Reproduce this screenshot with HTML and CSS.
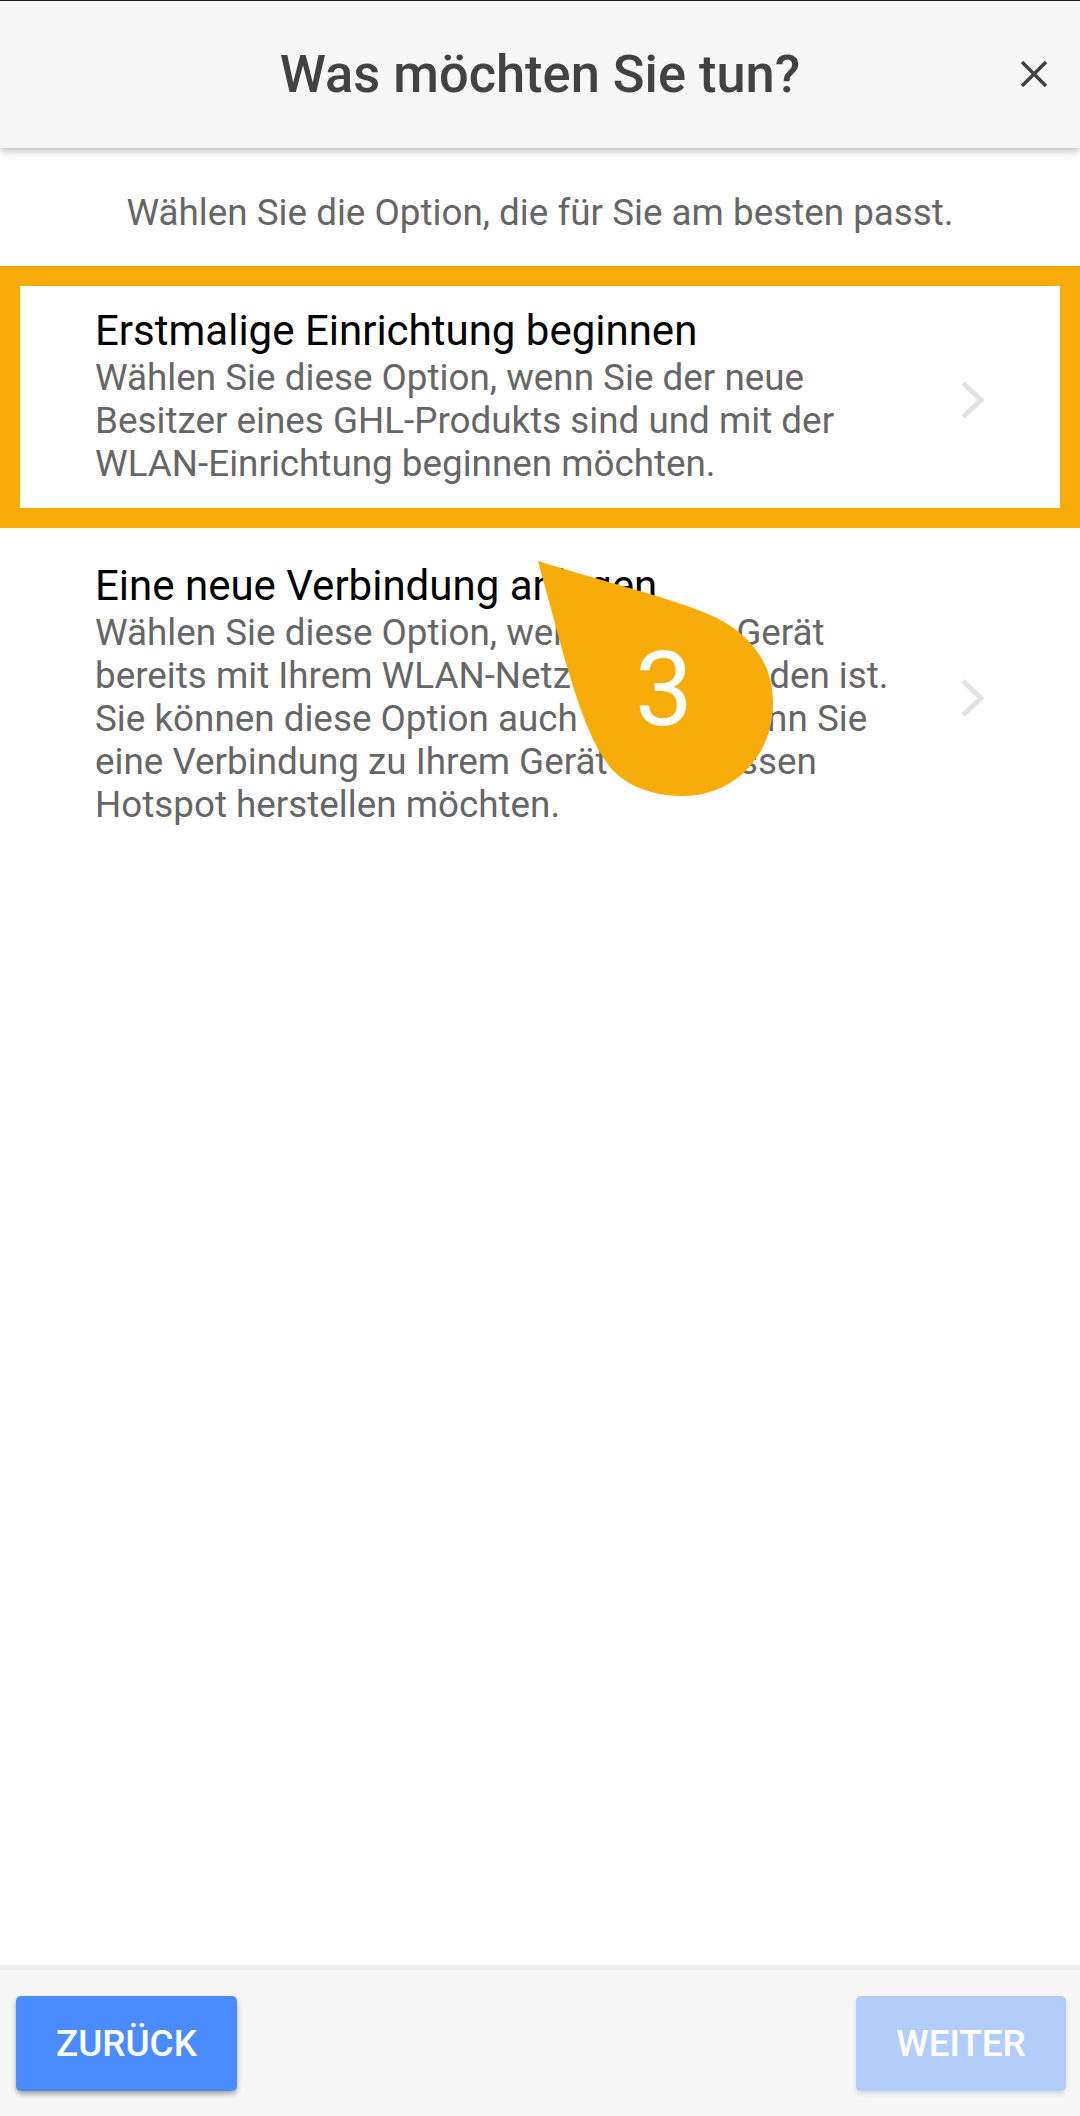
FILE: index.html
```html
<!DOCTYPE html>
<html lang="de">
<head>
  <meta charset="UTF-8" />
  <meta name="viewport" content="width=device-width, initial-scale=1.0"/>
  <title>Was möchten Sie tun?</title>
  <link rel="stylesheet" href="styles.css">
</head>
<body>
  <div class="screen">
    <header class="top-bar">
      <h1>Was möchten Sie tun?</h1>
      <button class="close" aria-label="Schließen">
        <svg width="28" height="28" viewBox="0 0 28 28"><path d="M2 2 L26 26 M26 2 L2 26" /></svg>
      </button>
    </header>

    <main class="content">
      <p class="intro">Wählen Sie die Option, die für Sie am besten passt.</p>

      <div class="option option-active">
        <div class="option-text">
          <h2>Erstmalige Einrichtung beginnen</h2>
          <p>Wählen Sie diese Option, wenn Sie der neue<br>Besitzer eines GHL-Produkts sind und mit der<br>WLAN-Einrichtung beginnen möchten.</p>
        </div>
        <svg class="chevron" width="26" height="40" viewBox="0 0 26 40"><path d="M3 3 L21 20 L3 37" /></svg>
      </div>

      <div class="option">
        <div class="option-text">
          <h2>Eine neue Verbindung anlegen</h2>
          <p>Wählen Sie diese Option, wenn Ihr GHL-Gerät<br>bereits mit Ihrem WLAN-Netzwerk verbunden ist.<br>Sie können diese Option auch wählen, wenn Sie<br>eine Verbindung zu Ihrem Gerät über dessen<br>Hotspot herstellen möchten.</p>
        </div>
        <svg class="chevron" width="26" height="40" viewBox="0 0 26 40"><path d="M3 3 L21 20 L3 37" /></svg>
      </div>
    </main>

    <footer class="bottom-bar">
      <button class="btn">ZURÜCK</button>
      <button class="btn btn-disabled">WEITER</button>
    </footer>

    <!-- step marker, sits over the second option -->
    <div class="marker">
      <svg width="240" height="240" viewBox="0 0 240 240">
        <path d="M0 0 C60 19 130 36 170 53 C210 70 235 100 235 142 C235 196 195 235 145 235 C110 235 85 222 72 206 C50 178 38 135 25 92 Z" />
      </svg>
      <span>3</span>
    </div>
  </div>
</body>
</html>
```

FILE: styles.css
```css
/* General */
body {
  font-family: Roboto, "Liberation Sans", sans-serif;
  margin: 0;
  background-color: #ffffff;
}

.screen {
  position: relative;
  display: flex;
  flex-direction: column;
  height: 2116px;
  overflow: hidden;
}

/* Top bar */
.top-bar {
  position: relative;
  display: flex;
  justify-content: center;
  align-items: center;
  height: 148px;
  box-sizing: border-box;
  padding-bottom: 2px;
  border-top: 1px solid #222;
  background-color: #f7f7f7;
  box-shadow: 0 3px 8px rgba(0, 0, 0, 0.25);
}

.top-bar h1 {
  margin: 0;
  font-size: 52.4px;
  font-weight: 500;
  color: #424242;
}

.close {
  position: absolute;
  right: 32px;
  top: 59px;
  padding: 0;
  border: none;
  background: none;
  line-height: 0;
}

.close path {
  stroke: #424242;
  stroke-width: 3.5;
  fill: none;
}

/* Options */
.content {
  flex: 1;
}

.intro {
  margin: 43px 0 32px;
  text-align: center;
  font-size: 36.8px;
  line-height: 43px;
  color: #666;
}

.option {
  display: flex;
  align-items: center;
  justify-content: space-between;
  padding: 33px 94px 36px 95px;
}

.option-active {
  padding: 20px 74px 23px 75px;
  border: 20px solid #f8ac0a;
}

.option h2 {
  margin: 0;
  font-size: 42px;
  line-height: 50px;
  font-weight: 400;
  color: #000;
}

.option p {
  margin: 0;
  font-size: 36.8px;
  line-height: 43px;
  color: #666;
}

.chevron {
  margin-top: 8px;
}

.chevron path {
  stroke: #e2e2e2;
  stroke-width: 5;
  fill: none;
}

/* Bottom bar */
.bottom-bar {
  display: flex;
  justify-content: space-between;
  align-items: center;
  height: 151px;
  box-sizing: border-box;
  padding: 0 14px 0 16px;
  border-top: 5px solid #eeeeee;
  background-color: #f7f7f7;
}

.btn {
  width: 221px;
  height: 95px;
  padding: 0;
  border: none;
  border-radius: 5px;
  font-family: inherit;
  font-size: 36.8px;
  font-weight: 500;
  color: #fff;
  background-color: #4a8bff;
  box-shadow: 0 3px 5px rgba(0, 0, 0, 0.35);
}

.btn-disabled {
  width: 210px;
  background-color: #b3cdfb;
  box-shadow: 0 3px 5px rgba(0, 0, 0, 0.12);
}

/* Step marker */
.marker {
  position: absolute;
  left: 538px;
  top: 561px;
  width: 240px;
  height: 240px;
  line-height: 0;
}

.marker path {
  fill: #f8ac0a;
}

.marker span {
  position: absolute;
  left: 126px;
  top: 128px;
  transform: translate(-50%, -50%);
  font-size: 103px;
  line-height: 103px;
  font-weight: 400;
  color: #fff;
}
```
